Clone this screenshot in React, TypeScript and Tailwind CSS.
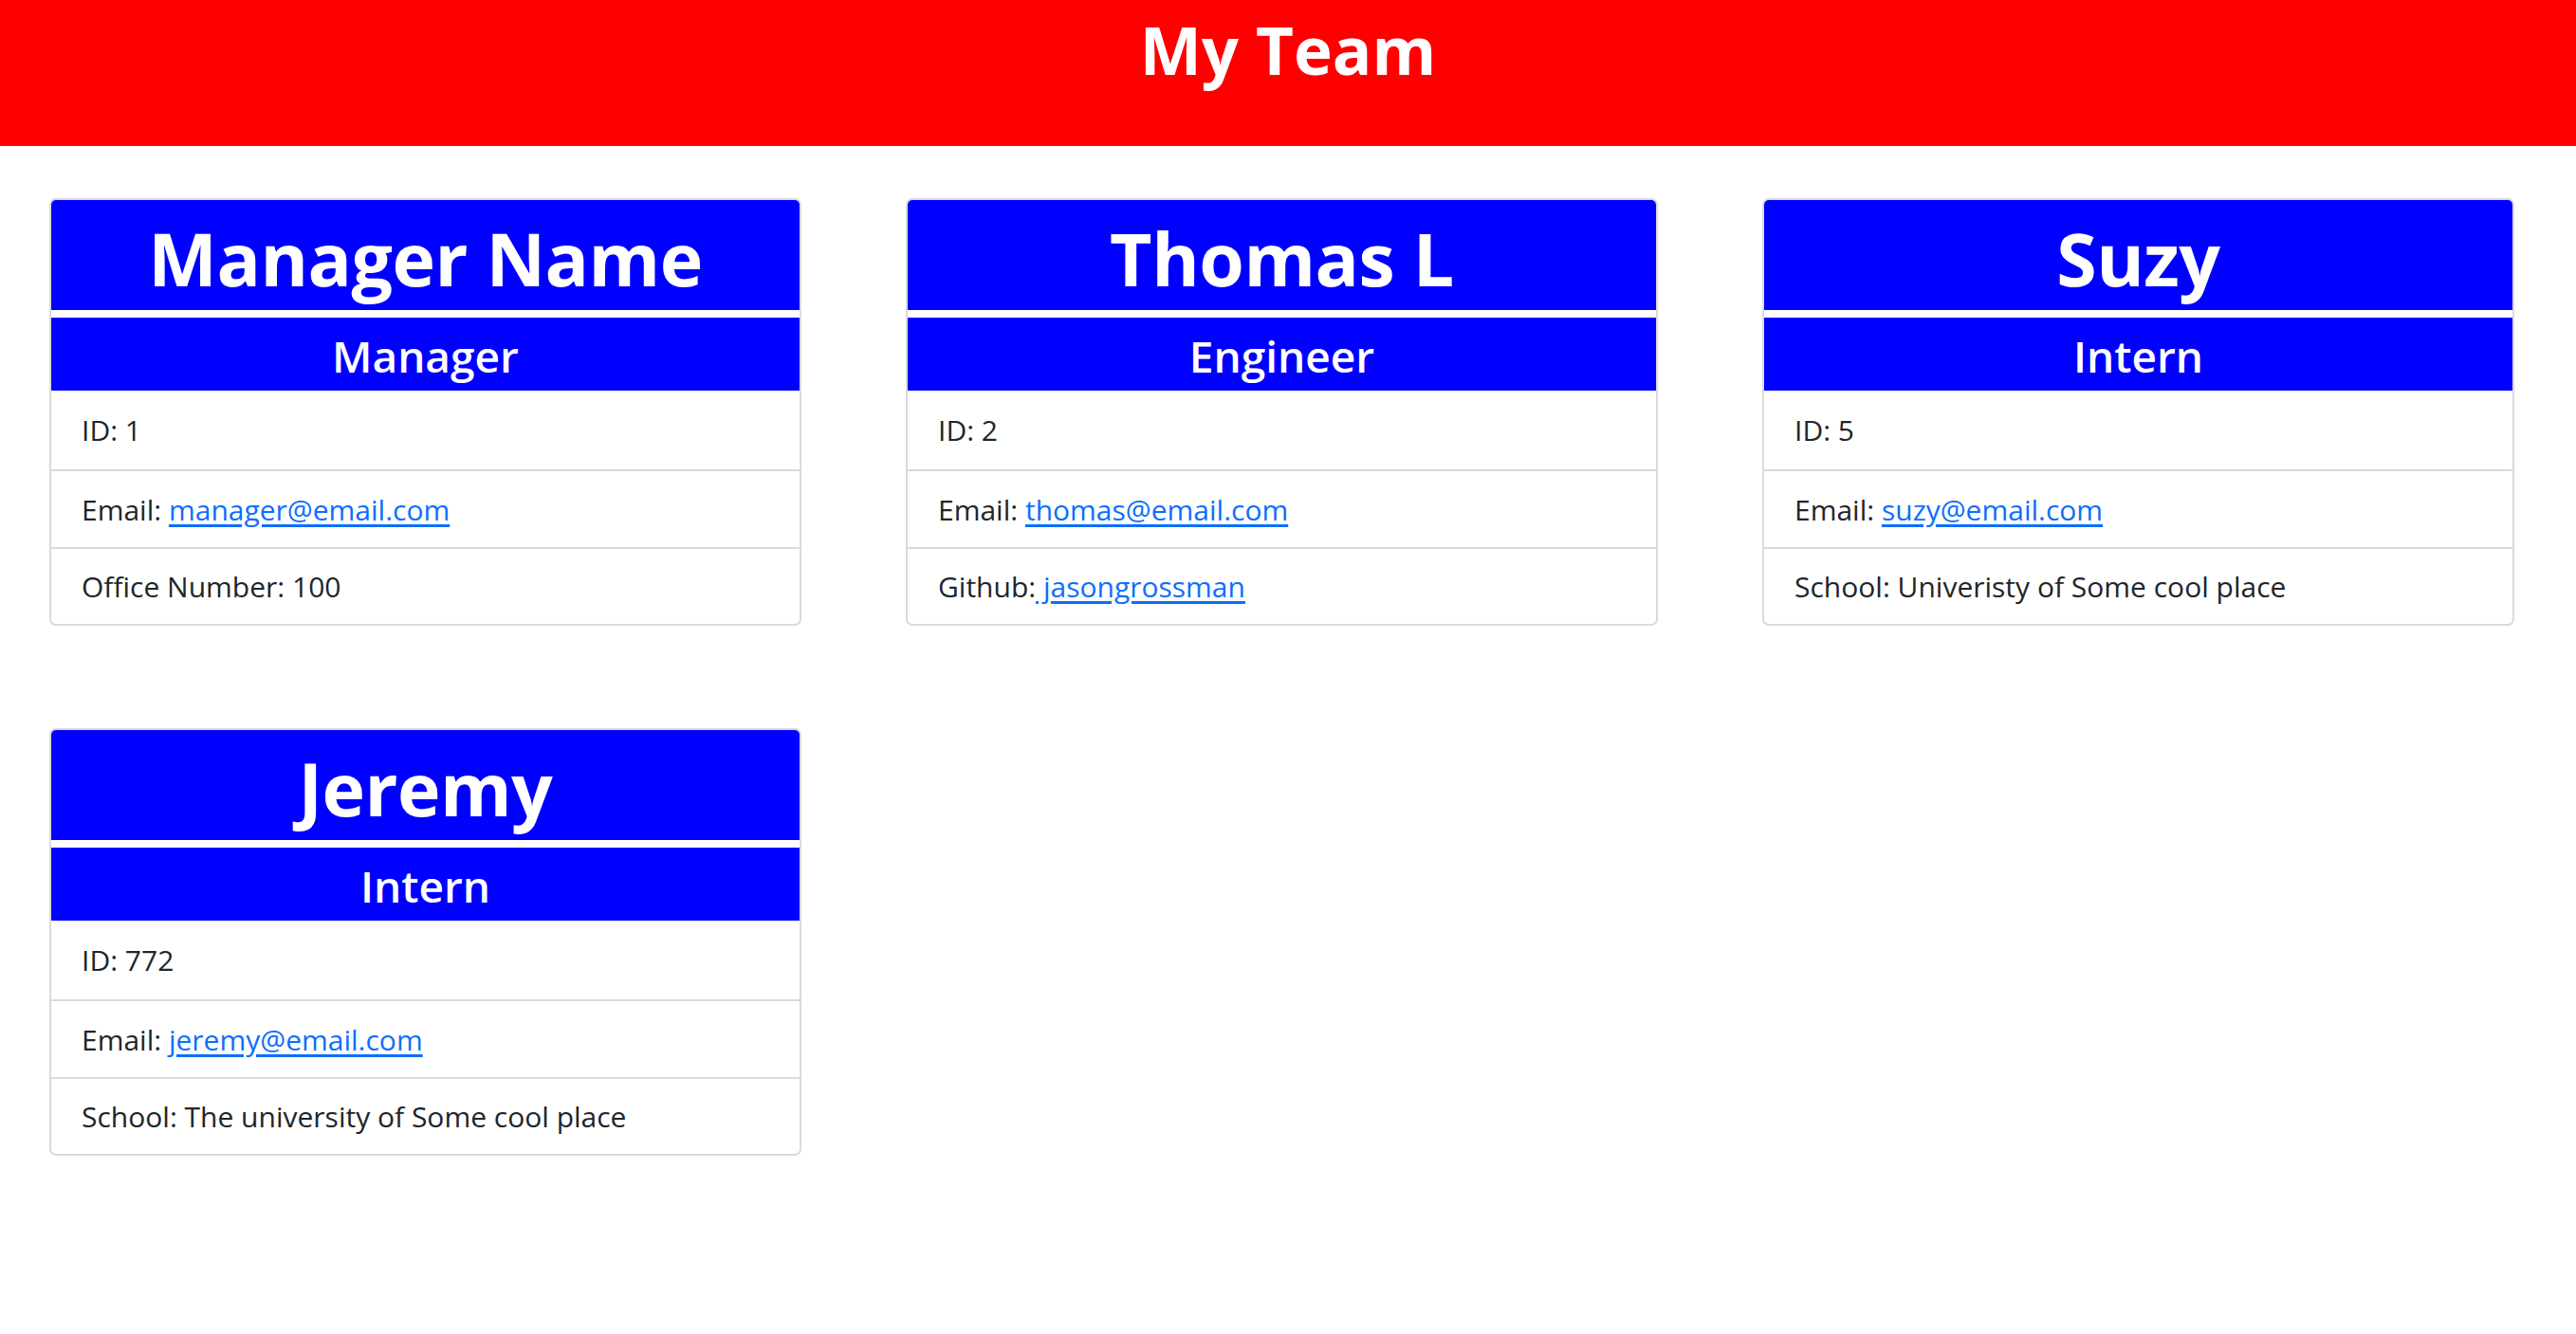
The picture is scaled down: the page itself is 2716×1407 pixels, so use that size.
import React from "react";

type Member = {
  name: string;
  role: string;
  id: string;
  email: string;
  extraLabel: string;
  extraValue: string;
  extraIsLink?: boolean;
};

const team: Member[] = [
  {
    name: "Manager Name",
    role: "Manager",
    id: "1",
    email: "manager@email.com",
    extraLabel: "Office Number: ",
    extraValue: "100",
  },
  {
    name: "Thomas L",
    role: "Engineer",
    id: "2",
    email: "thomas@email.com",
    extraLabel: "Github:",
    extraValue: " jasongrossman",
    extraIsLink: true,
  },
  {
    name: "Suzy",
    role: "Intern",
    id: "5",
    email: "suzy@email.com",
    extraLabel: "School: ",
    extraValue: "Univeristy of Some cool place",
  },
  {
    name: "Jeremy",
    role: "Intern",
    id: "772",
    email: "jeremy@email.com",
    extraLabel: "School: ",
    extraValue: "The university of Some cool place",
  },
];

const Card = ({ m }: { m: Member }) => {
  return (
    <div className="border-2 border-[#dadada] rounded-[7px] overflow-hidden bg-white">
      <div className="h-[116px] bg-[#0000ff] text-white flex items-center justify-center">
        <h2 className="text-[77px] font-bold leading-none tracking-[-0.5px] pt-[6px]">{m.name}</h2>
      </div>
      <div className="h-[77px] mt-[8px] bg-[#0000ff] text-white flex items-center justify-center">
        <h3 className="text-[46px] font-semibold leading-none pt-[2px]">{m.role}</h3>
      </div>
      <ul className="text-[#212529] text-[30px]">
        <li className="h-[83px] flex items-center px-[32px]">ID: {m.id}</li>
        <li className="h-[82px] flex items-center px-[32px] border-t-2 border-[#dadada]">
          <span className="whitespace-pre">
            Email:{" "}
            <a href={"mailto:" + m.email} className="text-[#0d6efd] underline underline-offset-[4px]">
              {m.email}
            </a>
          </span>
        </li>
        <li className="h-[81px] flex items-center px-[32px] border-t-2 border-[#dadada]">
          <span className="whitespace-pre">
            {m.extraLabel}
            {m.extraIsLink ? (
              <a href="#" className="text-[#0d6efd] underline underline-offset-[4px]">
                {m.extraValue}
              </a>
            ) : (
              m.extraValue
            )}
          </span>
        </li>
      </ul>
    </div>
  );
};

const App = () => {
  return (
    <div className="min-h-screen bg-white font-['Open_Sans',sans-serif]">
      <header className="h-[154px] bg-[#ff0000] text-white text-center pt-[11px]">
        <h1 className="text-[69px] font-bold leading-[1.2]">My Team</h1>
      </header>
      <main className="pt-[55px] pl-[52px] pr-[65px] grid grid-cols-3 gap-x-[110px] gap-y-[108px]">
        {team.map((m) => (
          <Card key={m.name} m={m} />
        ))}
      </main>
    </div>
  );
};

export default App;
